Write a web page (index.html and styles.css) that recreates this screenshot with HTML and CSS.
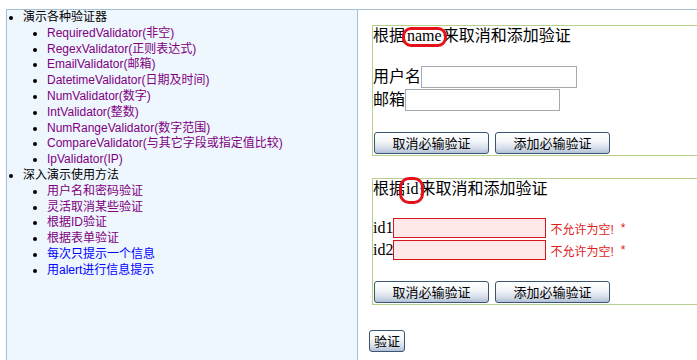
FILE: index.html
```html
<!DOCTYPE html>
<html>
<head>
<meta charset="utf-8">
<link rel="stylesheet" href="styles.css">
</head>
<body>
<div class="layout">
  <div class="nav">
    <ul class="menu">
      <li>演示各种验证器
        <ul class="sub">
          <li><a class="visited" href="#">RequiredValidator(非空)</a></li>
          <li><a class="visited" href="#">RegexValidator(正则表达式)</a></li>
          <li><a class="visited" href="#">EmailValidator(邮箱)</a></li>
          <li><a class="visited" href="#">DatetimeValidator(日期及时间)</a></li>
          <li><a class="visited" href="#">NumValidator(数字)</a></li>
          <li><a class="visited" href="#">IntValidator(整数)</a></li>
          <li><a class="visited" href="#">NumRangeValidator(数字范围)</a></li>
          <li><a class="visited" href="#">CompareValidator(与其它字段或指定值比较)</a></li>
          <li><a class="visited" href="#">IpValidator(IP)</a></li>
        </ul>
      </li>
      <li>深入演示使用方法
        <ul class="sub">
          <li><a class="visited" href="#">用户名和密码验证</a></li>
          <li><a class="visited" href="#">灵活取消某些验证</a></li>
          <li><a class="visited" href="#">根据ID验证</a></li>
          <li><a class="visited" href="#">根据表单验证</a></li>
          <li><a class="link" href="#">每次只提示一个信息</a></li>
          <li><a class="link" href="#">用alert进行信息提示</a></li>
        </ul>
      </li>
    </ul>
  </div>
  <div class="main">
    <div class="box box-name">
      <div class="title">根据<span class="mark mark-name">name</span>来取消和添加验证</div>
      <div class="row row-first"><span class="label">用户名</span><input class="field field-user" type="text"></div>
      <div class="row"><span class="label">邮箱</span><input class="field field-mail" type="text"></div>
      <div class="actions">
        <button class="btn btn-wide" type="button">取消必输验证</button>
        <button class="btn btn-wide" type="button">添加必输验证</button>
      </div>
    </div>
    <div class="box box-id">
      <div class="title">根据<span class="mark mark-id">id</span>来取消和添加验证</div>
      <div class="row row-err row-first"><span class="label">id1</span><input class="field field-err" type="text"><span class="err">不允许为空!</span><span class="star">*</span></div>
      <div class="row row-err row-second"><span class="label">id2</span><input class="field field-err" type="text"><span class="err">不允许为空!</span><span class="star">*</span></div>
      <div class="actions">
        <button class="btn btn-wide" type="button">取消必输验证</button>
        <button class="btn btn-wide" type="button">添加必输验证</button>
      </div>
    </div>
    <button class="btn btn-submit" type="button">验证</button>
  </div>
</div>
</body>
</html>
```

FILE: styles.css
```css
html, body {
  margin: 0;
  padding: 0;
  background: #ffffff;
  overflow: hidden;
}

.layout {
  display: grid;
  grid-template-columns: 352px 1fr;
  margin: 9px 0 0 6px;
  border-top: 1px solid #a7bfd4;
  height: 351px;
}

.nav {
  background: #eef6fe;
  border-left: 1px solid #a7bfd4;
  border-right: 1px solid #a7bfd4;
  font-family: "Liberation Sans", "Noto Sans CJK SC", sans-serif;
  font-size: 12px;
  line-height: 15.8px;
  color: #000;
}

.menu {
  margin: 0;
  padding: 0 0 0 16px;
  list-style: disc;
}

.sub {
  margin: 0;
  padding: 0 0 0 24px;
  list-style: disc;
}

.sub a {
  text-decoration: none;
}

.sub a.visited {
  color: #800080;
}

.sub a.link {
  color: #0000ff;
}

.main {
  overflow: hidden;
  padding: 15px 0 0 0;
  font-family: "Liberation Serif", "Noto Sans CJK SC", serif;
  font-size: 16px;
  color: #000;
}

.box {
  width: 420px;
  margin-left: 14px;
  border: 1px solid #b7d08e;
  display: flex;
  flex-direction: column;
  align-items: flex-start;
}

.box-id {
  margin-top: 22px;
}

.title {
  height: 20px;
  line-height: 20px;
  white-space: nowrap;
}

.mark {
  position: relative;
  display: inline-block;
}

.mark::after {
  content: "";
  position: absolute;
  border: 3px solid #e3121b;
  border-radius: 9px;
}

.mark-name {
  padding: 0 1px 0 2px;
}

.mark-name::after {
  left: -3px;
  right: -4px;
  top: 1px;
  bottom: -1px;
}

.mark-id {
  padding: 0 1px 0 1px;
}

.mark-id::after {
  left: -6px;
  right: -5px;
  top: -2px;
  bottom: -5px;
  border-radius: 10px;
}

.row {
  display: flex;
  align-items: center;
  height: 23px;
  white-space: nowrap;
}

.row-first {
  margin-top: 19px;
}

.label {
  line-height: 20px;
}

.field {
  margin: 0;
  padding: 0;
  box-sizing: border-box;
  font-size: 13px;
  background: #fff;
  border: 1px solid #a5a9ad;
}

.field-user {
  width: 156px;
  height: 22px;
}

.field-mail {
  width: 155px;
  height: 22px;
}

.row-err {
  height: 20px;
}

.row-second {
  margin-top: 2px;
}

.field-err {
  width: 153px;
  height: 20px;
  background: #ffe8e8;
  border: 1px solid #d2161c;
}

.err {
  margin-left: 4px;
  font-family: "Liberation Sans", "Noto Sans CJK SC", sans-serif;
  font-size: 12px;
  color: #e01b1b;
}

.star {
  margin-left: 7px;
  font-family: "Liberation Sans", sans-serif;
  font-size: 12px;
  color: #e01b1b;
}

.actions {
  display: flex;
  gap: 6px;
  margin: 21px 0 1px 1px;
}

.btn {
  box-sizing: border-box;
  height: 22px;
  padding: 0;
  font-family: "Noto Sans CJK SC", sans-serif;
  font-size: 13px;
  line-height: 18px;
  color: #000;
  border: 1px solid #3b5575;
  border-radius: 3px;
  background: linear-gradient(#ffffff 0%, #f4f6f9 40%, #d6deea 75%, #b3c1d6 100%);
}

.btn-wide {
  width: 115px;
}

.btn-submit {
  display: block;
  width: 36px;
  margin: 25px 0 0 11px;
}
```
